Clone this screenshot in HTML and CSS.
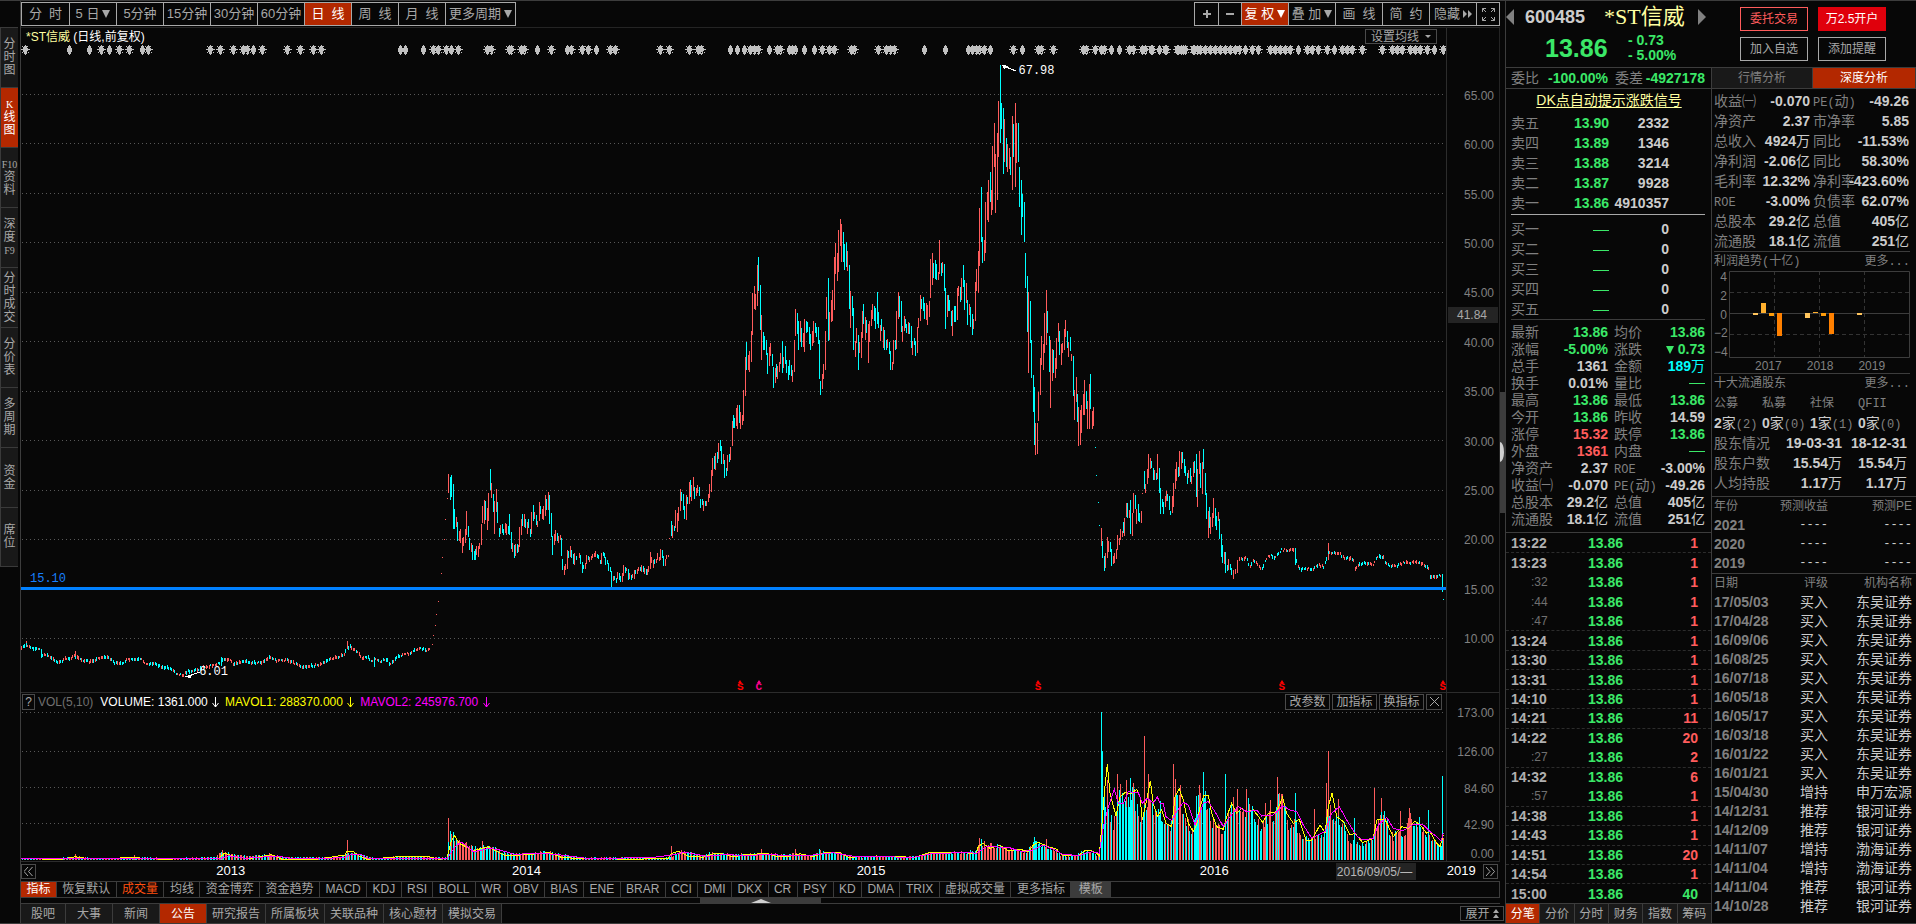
FILE: index.html
```html
<!DOCTYPE html>
<html lang="zh-CN">
<head>
<meta charset="utf-8">
<title>*ST信威 600485</title>
<link rel="stylesheet" href="styles.css">
</head>
<body>
<div class="app">
  <nav class="side">
    <button>分<br>时<br>图</button>
    <button class="on"><small>K</small><br>线<br>图</button>
    <button><small>F10</small><br>资<br>料</button>
    <button>深<br>度<br><small>F9</small></button>
    <button>分<br>时<br>成<br>交</button>
    <button>分<br>价<br>表</button>
    <button>多<br>周<br>期</button>
    <button>资<br>金</button>
    <button>席<br>位</button>
  </nav>

  <main class="main">
    <div class="toolbar">
      <div class="btns periods">
        <button>分&nbsp; 时</button><button>5 日 <i class="tri"></i></button><button>5分钟</button><button>15分钟</button><button>30分钟</button><button>60分钟</button><button class="on">日&nbsp; 线</button><button>周&nbsp; 线</button><button>月&nbsp; 线</button><button class="wide">更多周期 <i class="tri"></i></button>
      </div>
      <div class="btns tools">
        <button class="sm" aria-label="放大"><svg width="8" height="8"><path d="M0 4H8M4 0V8"/></svg></button><button class="sm" aria-label="缩小"><svg width="8" height="8"><path d="M0 4H8"/></svg></button><button class="on">复 权 <i class="tri"></i></button><button>叠 加 <i class="tri"></i></button><button>画&nbsp; 线</button><button>简&nbsp; 约</button><button>隐藏 <svg class="fill" width="9" height="8"><path d="M0 0L4 4L0 8ZM5 0L9 4L5 8Z"/></svg></button><button class="sm" aria-label="全屏"><svg class="thin" width="13" height="13"><path d="M.5 4V.5H4M.5.5L4 4M9 .5H12.500V4M12.500.5L9 4M.5 9V12.500H4M.5 12.500L4 9M9 12.500H12.500V9M12.500 12.500L9 9"/></svg></button>
      </div>
    </div>

    <section class="panel price">
      <div class="plot">
        <svg id="price" viewBox="21 28 1425 664" preserveAspectRatio="none"></svg>
        <h1 class="title">*ST信威 <span>(日线,前复权)</span></h1>
        <button class="ma-btn">设置均线 <i class="tri"></i></button>
        <span class="note high">67.98</span>
        <span class="note low">6.01</span>
        <span class="note level">15.10</span>
        <span class="ev e1">S</span><span class="ev e2">C</span><span class="ev e3">S</span><span class="ev e4">S</span><span class="ev e5">S</span>
      </div>
      <div class="axis">
        <span>65.00</span><span>60.00</span><span>55.00</span><span>50.00</span><span>45.00</span><span>40.00</span><span>35.00</span><span>30.00</span><span>25.00</span><span>20.00</span><span>15.00</span><span>10.00</span>
        <b class="cursor-price">41.84</b>
      </div>
    </section>

    <section class="panel vol">
      <div class="plot">
        <svg id="vol" viewBox="21 693 1425 168" preserveAspectRatio="none"></svg>
        <div class="legend">
          <button class="q">?</button><span class="dim">VOL(5,10)</span><span class="w">VOLUME: 1361.000 <svg width="7" height="11"><path d="M3.500 0V10M.5 6L3.500 10L6.500 6"/></svg></span><span class="y">MAVOL1: 288370.000 <svg width="7" height="11"><path d="M3.500 0V10M.5 6L3.500 10L6.500 6"/></svg></span><span class="m">MAVOL2: 245976.700 <svg width="7" height="11"><path d="M3.500 0V10M.5 6L3.500 10L6.500 6"/></svg></span>
        </div>
        <div class="vol-btns">
          <button>改参数</button><button>加指标</button><button>换指标</button><button class="x" aria-label="关闭"><svg width="9" height="9"><path d="M0 0L9 9M9 0L0 9"/></svg></button>
        </div>
      </div>
      <div class="axis"><span>173.00</span><span>126.00</span><span>84.60</span><span>42.90</span><span>0.00</span></div>
    </section>

    <div class="dates">
      <button aria-label="向左"><svg width="9" height="9"><path d="M4 0L0 4.500L4 9M8.500 0L4.500 4.500L8.500 9"/></svg></button>
      <span class="d d13">2013</span><span class="d d14">2014</span><span class="d d15">2015</span><span class="d d16">2016</span><span class="d d19">2019</span>
      <span class="cur">2016/09/05/—</span>
      <button aria-label="向右"><svg width="9" height="9"><path d="M0 0L4 4.500L0 9M4.500 0L8.500 4.500L4.500 9"/></svg></button>
    </div>

    <div class="inds"><div class="list">
      <button class="on">指标</button><button>恢复默认</button><button class="hot">成交量</button><button>均线</button><button>资金博弈</button><button>资金趋势</button><button>MACD</button><button>KDJ</button><button>RSI</button><button>BOLL</button><button>WR</button><button>OBV</button><button>BIAS</button><button>ENE</button><button>BRAR</button><button>CCI</button><button>DMI</button><button>DKX</button><button>CR</button><button>PSY</button><button>KD</button><button>DMA</button><button>TRIX</button><button>虚拟成交量</button><button>更多指标</button><button class="tpl">模板</button>
    </div></div>
    <div class="grip"><i><svg width="20" height="4"><path d="M0 4L10 0L20 4Z"/></svg></i></div>
    <div class="news">
      <button>股吧</button><button>大事</button><button>新闻</button><button class="on">公告</button><button>研究报告</button><button>所属板块</button><button>关联品种</button><button>核心题材</button><button>模拟交易</button>
      <button class="expand">展开 <svg width="6" height="9"><path d="M0 4L3 0L6 4ZM0 9L3 5L6 9Z"/></svg></button>
    </div>
  </main>

  <div class="vgrip"><i></i></div>

  <aside class="right">
    <header class="head">
      <div class="who">
        <div class="name"><i class="prev"></i><b>600485</b><strong>*ST信威</strong><i class="next"></i></div>
        <div class="last"><b class="big">13.86</b><div class="chg"><b>- 0.73</b><b>- 5.00%</b></div></div>
      </div>
      <div class="acts">
        <button class="a1">委托交易</button><button class="a2">万2.5开户</button><button>加入自选</button><button>添加提醒</button>
      </div>
    </header>

    <div class="quote">
      <div class="wei"><span>委比</span><b class="g">-100.00%</b><span>委差</span><b class="g">-4927178</b></div>
      <div class="dk"><a href="#dk">DK点自动提示涨跌信号</a></div>
      <table class="book">
        <tr><th>卖五</th><td class="g">13.90</td><td>2332</td></tr>
        <tr><th>卖四</th><td class="g">13.89</td><td>1346</td></tr>
        <tr><th>卖三</th><td class="g">13.88</td><td>3214</td></tr>
        <tr><th>卖二</th><td class="g">13.87</td><td>9928</td></tr>
        <tr><th>卖一</th><td class="g">13.86</td><td>4910357</td></tr>
      </table>
      <div class="buy"><table class="book">
        <tr><th>买一</th><td><i class="dash"></i></td><td>0</td></tr>
        <tr><th>买二</th><td><i class="dash"></i></td><td>0</td></tr>
        <tr><th>买三</th><td><i class="dash"></i></td><td>0</td></tr>
        <tr><th>买四</th><td><i class="dash"></i></td><td>0</td></tr>
        <tr><th>买五</th><td><i class="dash"></i></td><td>0</td></tr>
      </table></div>
      <table class="stats">
        <tr><th>最新</th><td class="g">13.86</td><th>均价</th><td class="g">13.86</td></tr>
        <tr><th>涨幅</th><td class="g">-5.00%</td><th>涨跌</th><td class="g"><i class="tri"></i> 0.73</td></tr>
        <tr><th>总手</th><td>1361</td><th>金额</th><td class="c">189<u>万</u></td></tr>
        <tr><th>换手</th><td>0.01%</td><th>量比</th><td><i class="dash"></i></td></tr>
        <tr><th>最高</th><td class="g">13.86</td><th>最低</th><td class="g">13.86</td></tr>
        <tr><th>今开</th><td class="g">13.86</td><th>昨收</th><td>14.59</td></tr>
        <tr><th>涨停</th><td class="r">15.32</td><th>跌停</th><td class="g">13.86</td></tr>
        <tr><th>外盘</th><td class="r">1361</td><th>内盘</th><td><i class="dash"></i></td></tr>
        <tr><th>净资产</th><td>2.37</td><th><s>ROE</s></th><td>-3.00%</td></tr>
        <tr><th>收益㈠</th><td>-0.070</td><th><s>PE(</s>动<s>)</s></th><td>-49.26</td></tr>
        <tr><th>总股本</th><td>29.2<u>亿</u></td><th>总值</th><td>405<u>亿</u></td></tr>
        <tr><th>流通股</th><td>18.1<u>亿</u></td><th>流值</th><td>251<u>亿</u></td></tr>
      </table>
      <div class="ticks">
        <div class="t"><b>13:22</b><b>13.86</b><b>1</b></div>
        <div class="t"><b>13:23</b><b>13.86</b><b>1</b></div>
        <div class="t s"><b>:32</b><b>13.86</b><b>1</b></div>
        <div class="t s"><b>:44</b><b>13.86</b><b>1</b></div>
        <div class="t s"><b>:47</b><b>13.86</b><b>1</b></div>
        <div class="t"><b>13:24</b><b>13.86</b><b>1</b></div>
        <div class="t"><b>13:30</b><b>13.86</b><b>1</b></div>
        <div class="t"><b>13:31</b><b>13.86</b><b>1</b></div>
        <div class="t"><b>14:10</b><b>13.86</b><b>1</b></div>
        <div class="t"><b>14:21</b><b>13.86</b><b>11</b></div>
        <div class="t"><b>14:22</b><b>13.86</b><b>20</b></div>
        <div class="t s"><b>:27</b><b>13.86</b><b>2</b></div>
        <div class="t"><b>14:32</b><b>13.86</b><b>6</b></div>
        <div class="t s"><b>:57</b><b>13.86</b><b>1</b></div>
        <div class="t"><b>14:38</b><b>13.86</b><b>1</b></div>
        <div class="t"><b>14:43</b><b>13.86</b><b>1</b></div>
        <div class="t"><b>14:51</b><b>13.86</b><b>20</b></div>
        <div class="t"><b>14:54</b><b>13.86</b><b>1</b></div>
        <div class="t"><b>15:00</b><b>13.86</b><b class="g">40</b></div>
      </div>
      <div class="qtabs"><button class="on">分笔</button><button>分价</button><button>分时</button><button>财务</button><button>指数</button><button>筹码</button></div>
    </div>

    <div class="deep">
      <div class="dtabs"><button>行情分析</button><button class="on">深度分析</button></div>
      <table class="fin">
        <tr><th>收益㈠</th><td>-0.070</td><th><s>PE(</s>动<s>)</s></th><td>-49.26</td></tr>
        <tr><th>净资产</th><td>2.37</td><th>市净率</th><td>5.85</td></tr>
        <tr><th>总收入</th><td>4924<u>万</u></td><th>同比</th><td>-11.53%</td></tr>
        <tr><th>净利润</th><td>-2.06<u>亿</u></td><th>同比</th><td>58.30%</td></tr>
        <tr><th>毛利率</th><td>12.32%</td><th>净利率</th><td><span class="pull">-423.60%</span></td></tr>
        <tr><th><s>ROE</s></th><td>-3.00%</td><th>负债率</th><td>62.07%</td></tr>
        <tr><th>总股本</th><td>29.2<u>亿</u></td><th>总值</th><td>405<u>亿</u></td></tr>
        <tr><th>流通股</th><td>18.1<u>亿</u></td><th>流值</th><td>251<u>亿</u></td></tr>
      </table>
      <div class="cap"><span>利润趋势<s>(</s>十亿<s>)</s></span><a href="#more1">更多<s>...</s></a></div>
      <div class="profit">
        <div class="py"><span>4</span><span>2</span><span>0</span><span>−2</span><span>−4</span></div>
        <svg viewBox="1729 272 181 87" preserveAspectRatio="none" class="pbox">
          <path class="grid" d="M1774.500 272V358M1819.500 272V358M1864.500 272V358M1730 293.500H1909M1730 335.500H1909"/>
          <path class="frame" d="M1729.500 272.500H1909.500V358.500H1729.500ZM1730 314.500H1909"/>
          <path fill="#ffc45c" d="M1753 314h5v2h-5zM1805 314h5v5h-5zM1857 314h5v2h-5z"/>
          <path fill="#ffb02e" d="M1761 304h5v10h-5zM1813 313h5v1h-5z"/>
          <path fill="#ff9c0a" d="M1769 314h5v3h-5zM1821 314h5v3h-5z"/>
          <path fill="#ff8000" d="M1777 314h5v23h-5zM1829 314h5v21h-5z"/>
        </svg>
        <div class="px"><span>2017</span><span>2018</span><span>2019</span></div>
      </div>
      <div class="cap"><span>十大流通股东</span><a href="#more2">更多<s>...</s></a></div>
      <div class="four dimrow"><span>公募</span><span>私募</span><span>社保</span><span><s>QFII</s></span></div>
      <div class="four"><span><b>2</b>家<s>(2)</s></span><span><b>0</b>家<s>(0)</s></span><span><b>1</b>家<s>(1)</s></span><span><b>0</b>家<s>(0)</s></span></div>
      <table class="hold">
        <tr><th>股东情况</th><td>19-03-31</td><td>18-12-31</td></tr>
        <tr><th>股东户数</th><td>15.54<u>万</u></td><td>15.54<u>万</u></td></tr>
        <tr><th>人均持股</th><td>1.17<u>万</u></td><td>1.17<u>万</u></td></tr>
      </table>
      <table class="fc">
        <tr class="h"><th>年份</th><th>预测收益</th><th>预测PE</th></tr>
        <tr><td>2021</td><td>----</td><td>----</td></tr>
        <tr><td>2020</td><td>----</td><td>----</td></tr>
        <tr><td>2019</td><td>----</td><td>----</td></tr>
      </table>
      <table class="fc rate">
        <tr class="h"><th>日期</th><th>评级</th><th>机构名称</th></tr>
        <tr><td>17/05/03</td><td>买入</td><td>东吴证券</td></tr>
        <tr><td>17/04/28</td><td>买入</td><td>东吴证券</td></tr>
        <tr><td>16/09/06</td><td>买入</td><td>东吴证券</td></tr>
        <tr><td>16/08/25</td><td>买入</td><td>东吴证券</td></tr>
        <tr><td>16/07/18</td><td>买入</td><td>东吴证券</td></tr>
        <tr><td>16/05/18</td><td>买入</td><td>东吴证券</td></tr>
        <tr><td>16/05/17</td><td>买入</td><td>东吴证券</td></tr>
        <tr><td>16/03/18</td><td>买入</td><td>东吴证券</td></tr>
        <tr><td>16/01/22</td><td>买入</td><td>东吴证券</td></tr>
        <tr><td>16/01/21</td><td>买入</td><td>东吴证券</td></tr>
        <tr><td>15/04/30</td><td>增持</td><td>申万宏源</td></tr>
        <tr><td>14/12/31</td><td>推荐</td><td>银河证券</td></tr>
        <tr><td>14/12/09</td><td>推荐</td><td>银河证券</td></tr>
        <tr><td>14/11/07</td><td>增持</td><td>渤海证券</td></tr>
        <tr><td>14/11/04</td><td>增持</td><td>渤海证券</td></tr>
        <tr><td>14/11/04</td><td>推荐</td><td>银河证券</td></tr>
        <tr><td>14/10/28</td><td>推荐</td><td>银河证券</td></tr>
      </table>
    </div>
  </aside>
</div>
<script src="chart.js"></script>
</body>
</html>
```

FILE: styles.css
```css
* { box-sizing: border-box; }
body { margin: 0; background: #070707; color: #a8a8a8; font: 12px/14px "Liberation Sans", "Noto Sans CJK SC", sans-serif; }
button { margin: 0; padding: 0; border: 0; background: none; color: inherit; font: inherit; white-space: nowrap; cursor: pointer; }
i, u, s { font-style: normal; text-decoration: none; }
svg { display: inline-block; flex: none; }
table { border-collapse: collapse; width: 100%; table-layout: fixed; }
th { font-weight: normal; text-align: left; padding: 0; color: #808080; white-space: nowrap; }
td { text-align: right; padding: 0; font-weight: bold; color: #cccccc; white-space: nowrap; }
u { font-weight: normal; }
s { font: 12px/12px "Liberation Mono", monospace; color: #808080; }
.on, button.on { background: #b32800; color: #ffffff; }
.g, td.g { color: #3be868; }
.r, td.r { color: #ff5c5c; }
.c, td.c { color: #00ffff; }
.tri { display: inline-block; border: 4px solid transparent; border-top: 8px solid currentColor; border-bottom: 0; }
.dash { display: inline-block; width: 16px; height: 1px; background: #3be868; vertical-align: middle; }

.app { display: grid; grid-template-columns: 21px minmax(0, 1fr) 5px 411px; min-height: 100vh; border-top: 1px solid #3c3c3c; border-bottom: 1px solid #3c3c3c; }

.side { border-right: 1px solid #3c3c3c; padding: 26px 2px 0 0; display: flex; flex-direction: column; }
.side button { height: 60px; border: 1px solid #3a3a3a; border-width: 1px 0 0 1px; background: #191919; line-height: 13px; font-size: 12px; }
.side button.on { background: #b32800; }
.side button:last-child { border-bottom-width: 1px; }
.side small { font: 10px/13px "Liberation Serif", serif; }

.main { display: flex; flex-direction: column; min-width: 0; }
.toolbar { display: flex; justify-content: space-between; height: 27px; padding-top: 1px; border-bottom: 1px solid #242424; }
.btns { display: flex; height: 24px; border: 1px solid #a8a8a8; }
.btns button { width: 47px; border-left: 1px solid #a8a8a8; display: flex; align-items: center; justify-content: center; gap: 3px; font-size: 13px; }
.btns button:first-child { border-left: 0; }
.btns .wide { width: 70px; }
.btns .sm { width: 23px; }
.btns svg path { stroke: currentColor; stroke-width: 2; fill: none; }
.btns svg.fill path { fill: currentColor; stroke: none; }
.btns svg.thin path { stroke-width: 1; }

.panel { display: grid; grid-template-columns: minmax(0, 1fr) 53px; border-right: 1px solid #242424; }
.price { flex: 1 1 664px; }
.vol { height: 170px; border-top: 1px solid #2c2c2c; border-bottom: 1px solid #2c2c2c; }
.plot { position: relative; min-width: 0; }
.plot > svg { position: absolute; width: 100%; height: 100%; }
.axis { position: relative; border-left: 1px solid #2c2c2c; color: #808080; text-align: right; padding-right: 5px; }
.price .axis { display: flex; flex-direction: column; justify-content: space-between; padding-top: 61px; padding-bottom: 46px; }
.vol .axis { display: grid; grid-template-rows: 39fr 36fr 36fr 29fr 14px; padding-top: 13px; }
.cursor-price { position: absolute; left: 1px; right: 1px; top: 42%; height: 16px; line-height: 16px; padding-right: 11px; background: #242424; color: #a8a8a8; font-weight: normal; }
.title { position: absolute; left: 5px; top: 2px; margin: 0; font-size: 12px; line-height: 14px; font-weight: normal; color: #ffffa0; }
.title span { color: #ffffff; }
.ma-btn { position: absolute; right: 9px; top: 1px; width: 72px; height: 15px; border: 1px solid #4a4a4a; background: #070707; display: flex; align-items: center; justify-content: center; gap: 6px; }
.ma-btn .tri { border-width: 3px 3px 0; }
.note { position: absolute; color: #ffffff; font: 12px/14px "Liberation Mono", monospace; }
.high { left: 70%; top: 36px; }
.low { left: 12.500%; top: 96%; }
.level { left: 9px; top: 82%; color: #1880ff; }
.ev { position: absolute; bottom: 0; width: 8px; text-align: center; color: #ff0000; font: bold 11px/9px "Liberation Mono", monospace; }
.ev::before { content: ""; display: block; margin: 0 2px; border: 2px solid transparent; border-top: 0; border-bottom: 3px solid currentColor; }
.e1 { left: 50.200%; }
.e2 { left: 51.500%; color: #ff0090; }
.e3 { left: 71.100%; }
.e4 { left: 88.200%; }
.e5 { left: 99.500%; }

.legend { position: absolute; left: 1px; top: 1px; display: flex; align-items: center; height: 16px; gap: 6px; }
.legend .q { width: 13px; height: 16px; border: 1px solid #4a4a4a; }
.legend svg { margin: 0 0 -2px 1px; }
.legend path, .dates path, .vol-btns path { stroke: currentColor; fill: none; }
.dim { color: #707070; margin-left: -3px; margin-right: 1px; }
.w { color: #ffffff; }
.y { color: #ffff00; }
.m { color: #ff00ff; }
.vol-btns { position: absolute; right: 4px; top: 1px; display: flex; gap: 2px; }
.vol-btns button { width: 45px; height: 16px; border: 1px solid #4a4a4a; background: #070707; }
.vol-btns .x { width: 16px; }

.dates { position: relative; height: 19px; display: flex; justify-content: space-between; align-items: center; padding-right: 2px; }
.dates button { width: 15px; height: 15px; border: 1px solid #4a4a4a; display: grid; place-items: center; }
.d { position: absolute; top: 1px; font-size: 13px; line-height: 15px; color: #ffffff; }
.d13 { left: 13.200%; }
.d14 { left: 33.200%; }
.d15 { left: 56.500%; }
.d16 { left: 79.700%; }
.d19 { left: 96.400%; }
.cur { position: absolute; left: 88.900%; top: 1px; width: 80px; height: 17px; line-height: 19px; padding-left: 1px; background: #242424; color: #b8b8b8; }

.inds { height: 17px; border: 1px solid #3c3c3c; border-width: 1px 1px 1px 0; }
.inds .list { display: flex; width: 1090px; max-width: 100%; height: 15px; }
.inds button { flex: 1 1 auto; border-right: 1px solid #3c3c3c; line-height: 15px; }
.inds .hot { color: #ff5010; }
.inds .tpl { background: #3c3c3c; padding: 0 2px; }
.grip { height: 6px; border-bottom: 1px solid #3c3c3c; }
.grip i { display: block; width: 121px; height: 5px; margin: 0 auto; background: #3c3c3c; text-align: center; line-height: 0; }
.grip svg { fill: #d0d0d0; margin-top: 1px; }
.news { display: flex; height: 19px; }
.news button { min-width: 47px; background: #191919; border-right: 1px solid #3c3c3c; }
.news button:first-child { min-width: 45px; }
.news .on { background: #b32800; }
.news button:nth-child(n+5) { width: 59px; }
.news button.expand { margin: 2px -4px 2px auto; width: 44px; min-width: 0; border: 1px solid #4a4a4a; background: #070707; display: flex; align-items: center; justify-content: center; gap: 3px; }
.news svg { fill: currentColor; }

.vgrip { display: flex; align-items: center; }
.vgrip i { width: 5px; height: 121px; margin-top: -20px; background: #3c3c3c; display: flex; align-items: center; }
.vgrip i::before { content: ""; width: 4px; height: 20px; border-radius: 0 4px 4px 0 / 0 10px 10px 0; background: #d0d0d0; }

.right { display: grid; grid-template-columns: 206px minmax(0, 1fr); grid-template-rows: 66px 1fr; border-left: 1px solid #3c3c3c; font-size: 14px; }
.head { grid-column: 1 / 3; display: flex; }
.who { width: 234px; }
.name { display: flex; align-items: center; height: 32px; }
.name b { font-size: 18px; color: #cccccc; margin-left: 11px; width: 79px; }
.name strong { font: 22px/28px "Liberation Serif", "Noto Sans CJK SC", serif; color: #ffffa0; width: 94px; }
.prev, .next { border: 8px solid transparent; }
.prev { border-left: 0; border-right-color: #808080; }
.next { border-right: 0; border-left-color: #808080; }
.last { display: flex; color: #3be868; padding-left: 39px; align-items: center; }
.big { font-size: 25px; line-height: 30px; width: 83px; }
.chg b { display: block; line-height: 15px; }
.acts { display: grid; grid-template-columns: 68px 68px; grid-auto-rows: 24px; gap: 6px 10px; padding-top: 6px; font-size: 12px; }
.acts button { border: 1px solid #a8a8a8; }
.acts .a1 { border-color: #ff5c5c; color: #ff5c5c; }
.acts .a2 { background: #e0000c; border-color: #e0000c; color: #ffffff; }

.quote { border-right: 1px solid #3c3c3c; display: flex; flex-direction: column; }
.wei { display: flex; height: 22px; line-height: 20px; padding: 0 6px 0 5px; border-top: 1px solid #3c3c3c; border-bottom: 1px solid #3c3c3c; color: #808080; white-space: nowrap; }
.wei b:nth-child(2) { width: 69px; margin-right: 7px; }
.wei b { text-align: right; }
.wei b:last-child { margin-left: auto; }
.dk { height: 24px; text-align: center; line-height: 22px; padding-left: 1px; }
.dk a { color: #ffffa0; text-underline-offset: 2px; }
.book { width: 158px; margin-left: 5px; }
.book tr { height: 20px; }
.book th { width: 40px; }
.book td:nth-child(2) { width: 58px; }
.buy { margin: 1px 6px 0 5px; padding-top: 4px; border-top: 1px solid #a8a8a8; border-bottom: 1px solid #3c3c3c; }
.buy .book { margin-left: 0; }
.book th, .stats th, .fin th, .hold th { line-height: 17px; }
.stats { width: 194px; margin: 3px 6px 5px 5px; }
.stats tr { height: 17px; }
.stats th, .stats td { line-height: 16px; }
.stats th:nth-child(3) { padding-left: 6px; }
.stats th { width: 42px; }
.stats td:nth-child(2) { width: 55px; }
.stats th:nth-child(3) { width: 50px; }
.ticks { flex: 1; display: flex; flex-direction: column; border-top: 1px solid #3c3c3c; }
.t { flex: 1; display: grid; grid-template-columns: 48px 64px 75px; align-items: center; padding-left: 5px; color: #3be868; border-top: 1px dashed #2c2c2c; line-height: 16px; }
.t b { text-align: right; }
.t b:first-child { text-align: left; color: #b0b0b0; }
.t b:last-child { color: #ff5c5c; }
.t b.g:last-child { color: #3be868; }
.t.s, .t:first-child { border-top-color: transparent; }
.t.s b:first-child { font-weight: normal; font-size: 12px; color: #707070; padding-left: 20px; }
.qtabs { display: flex; height: 20px; border-top: 1px solid #3c3c3c; font-size: 12px; }
.qtabs button { flex: 1; background: #191919; border-right: 1px solid #3c3c3c; }
.qtabs .on { background: #b32800; }
.qtabs button:last-child { border-right: 0; }

.deep { display: flex; flex-direction: column; min-width: 0; color: #808080; }
.dtabs { display: flex; height: 22px; border-top: 1px solid #3c3c3c; border-bottom: 1px solid #3c3c3c; font-size: 12px; flex: none; }
.dtabs button { width: 101px; background: #191919; border-right: 1px solid #3c3c3c; }
.dtabs button.on { flex: 1; background: #b32800; }
.fin { width: 195px; margin: 2px 0 0 2px; }
.fin tr { height: 20px; }
.fin th { width: 42px; }
.fin td:nth-child(2) { width: 54px; }
.fin th:nth-child(3) { padding-left: 3px; width: 44px; }
.fin td:nth-child(4) { width: 55px; }
.pull { margin-left: -8px; }
.cap { display: flex; justify-content: space-between; margin: 0 6px 0 2px; border-top: 1px solid #3c3c3c; font-size: 12px; line-height: 19px; height: 20px; }
.cap a { color: #808080; text-decoration: none; }
.profit { display: grid; grid-template-columns: 15px 1fr; margin: 0 6px 0 2px; grid-template-rows: 87px 15px; font-size: 12px; }
.py { display: flex; flex-direction: column; justify-content: space-between; text-align: right; padding-right: 2px; line-height: 12px; }
.pbox { width: 100%; height: 87px; }
.pbox .grid { stroke: #333333; stroke-dasharray: 4 3; fill: none; }
.pbox .frame { stroke: #3c3c3c; fill: none; }
.px { grid-column: 2; display: flex; gap: 25px; padding-left: 26px; line-height: 17px; height: 15px; }
.four { display: grid; grid-template-columns: repeat(4, 1fr); margin-left: 2px; margin-right: 10px; line-height: 20px; height: 20px; color: #cccccc; white-space: nowrap; }
.dimrow { color: #808080; font-size: 12px; }
.hold { width: 193px; margin-left: 2px; }
.hold tr { height: 20px; }
.hold th { width: 60px; }
.hold td:nth-child(2) { width: 68px; }
.fc { margin-top: 3px; border-top: 1px solid #3c3c3c; border-collapse: separate; border-spacing: 0; padding: 0 4px 0 2px; }
.fc tr { height: 19px; line-height: 17px; }
.fc .h { font-size: 12px; }
.fc th { text-align: right; }
.fc th:first-child, .fc td:first-child { text-align: left; color: #808080; width: 66px; }
.fc th:nth-child(2) { width: 48px; }
.fc td { font-weight: normal; }
.fc td:first-child { font-weight: bold; }
.fc:not(.rate) td:nth-child(n+2) { font: 12px/17px "Liberation Mono", monospace; }
.fc.rate { margin-top: 0; }
```

FILE: chart.js
```js
const NS = "http://www.w3.org/2000/svg";
const price = document.getElementById("price");
const vol = document.getElementById("vol");

function add(svg, d, attrs) {
  const p = document.createElementNS(NS, "path");
  p.setAttribute("d", d);
  p.setAttribute("shape-rendering", "crispEdges");
  for (const k in attrs) p.setAttribute(k, attrs[k]);
  svg.appendChild(p);
}

// Deterministic noise so that the drawing is the same on every load.
let seed = 7;
function rnd() {
  seed = (seed * 16807) % 2147483647;
  return seed / 2147483647;
}

function at(pts, x) {
  for (let i = 1; i < pts.length; i++) {
    if (x <= pts[i][0]) {
      const a = pts[i - 1], b = pts[i];
      return a[1] + (b[1] - a[1]) * (x - a[0]) / (b[0] - a[0]);
    }
  }
  return pts[pts.length - 1][1];
}

function pairs(s, ox, oy, sx, sy) {
  return s.trim().split(/\s+/).map(t => {
    const [x, y] = t.split(",").map(Number);
    return [ox + x / sx, oy + y / sy];
  });
}

// Horizontal dotted rules.
function rules(svg, ys) {
  add(svg, ys.map(y => `M22 ${y}.5H1446`).join(""), { stroke: "#585858", "stroke-dasharray": "1 3", fill: "none" });
}
rules(price, [94, 143, 193, 242, 292, 341, 391, 440, 490, 539, 638]);
rules(vol, [712, 751, 787, 823]);

const paths = { r: "", c: "" };
function bar(c, x, t, b) {
  paths[c] += `M${Math.floor(x) + 0.5} ${Math.round(t)}V${Math.max(Math.round(b), Math.round(t) + 1)}`;
}
function bars(s, ox, oy, sx) {
  for (const tok of s.trim().split(/\s+/)) {
    const [x, t, b] = tok.slice(1).split(",").map(Number);
    bar(tok[0], ox + x / sx, oy + t / 3, oy + (b || t + 3) / 3);
  }
}
function walk(s, ox, oy) {
  const pts = pairs(s, ox, oy, 3, 3);
  let k = 0;
  for (let x = pts[0][0]; x < pts[pts.length - 1][0]; x += k++ % 2 ? 1 : 2) {
    const m = at(pts, x) + (rnd() - 0.5) * 2, h = 1 + rnd() * 1;
    bar(rnd() < 0.5 ? "r" : "c", x, m - h, m + h);
  }
}

walk("65,1046 80,1035 105,1046 122,1048 127,1070 137,1062 155,1075 178,1088 195,1078 215,1073 226,1070 245,1080 270,1086 290,1078 305,1071 330,1073 345,1090 360,1092 385,1079 410,1080 425,1078 440,1092 465,1090 490,1103 515,1106 530,1120 550,1124 565,1114 590,1110 615,1100 640,1096 660,1090 670,1075 690,1080 703,1095 720,1088 740,1085 765,1088 790,1086 812,1070 830,1083 860,1080 880,1086 905,1100 935,1098 965,1093 985,1080 1010,1072 1032,1066 1042,1045 1050,1040 1070,1052 1088,1075 1105,1072 1120,1085 1130,1078 1145,1085 1158,1075 1170,1092 1185,1080 1205,1065 1235,1060 1255,1045 1280,1050 1294,1050", 0, 300);
bars("r80,1023,1040 c125,1048,1075 r226,1053,1072 c664,1072,1098 r1042,1023,1048 c1123,1070,1101 r1297,1033 r1300,1006 r1306,976 r1309,943 r1315,904 r1324,820 r1327,772 r1333,718 r1336,658 r1342,595 r1345,522,578 c1351,530,600 c1354,525,590 c1360,552,687 c1363,627,687 r1369,651,681 c1372,666,723 r1378,694,723 r1381,687,729 r1387,714,759 r1390,711,738 r1396,687,729 r1399,633,705 c1405,678,711 c1408,714,750 r1414,729,755 c1417,735,780 c1423,753,780 c1426,747,780 r1429,738,765 r1435,738,771 r1438,729,747", 0, 300, 3);

bars(`r4,972,1035 r7,918,969 r13,900,972 c16,903,960 r22,924,990 r25,879,963 c31,807,870 r34,849,894 c40,882,936 r43,903,1002 r49,867,936 c52,906,969 c58,984,1011 r61,975,1002 c67,972,999 c70,987,1005 r76,969,999 r79,972,1005 c85,978,1002 c88,942,1005 c94,996,1047 r97,1029,1056 c103,1035,1074 r106,1032,1068 c112,1032,1059 r115,1035,1056 r118,981,1041 r124,957,1005 c127,942,978 r133,942,981 c136,957,984 r142,966,1002 c145,957,984 c151,987,1011 r154,936,1002 c160,915,963 r163,936,957 c169,945,975 r172,963,981 r178,906,963 c181,918,942 r187,927,957 r190,918,960 r196,885,948 c199,897,930 r205,876,930 c208,885,972 c214,939,1011 c217,1008,1065 r223,1002,1035 r226,990,1023 c232,999,1023 r235,1008,1029 r241,1005,1020 c244,1014,1068 c247,1077,1110 r253,1098,1125 r256,1092,1110 r262,1050,1107 c265,1053,1074 r271,1038,1071 c274,1050,1074 c280,1062,1092 r283,1059,1095 c289,1068,1080 r298,1059,1074 c301,1065,1092 c307,1086,1119 c310,1095,1107 r316,1089,1107 r319,1065,1092 c325,1068,1080 r328,1071,1086 r334,1068,1080 r337,1062,1074 r343,1059,1071 r346,1053,1071 c352,1062,1074 c355,1065,1077 c361,1080,1092 r364,1059,1092 c370,1056,1068 c373,1059,1074 c376,1071,1095 c382,1080,1092 c385,1089,1113 c391,1101,1116 c394,1113,1161 r400,1128,1143 c403,1128,1140 c409,1134,1149 r412,1116,1137 c418,1119,1140 c421,1128,1146 r427,1119,1146 r430,1095,1128 c436,1101,1119 r439,1104,1113 c445,1107,1140 r448,1119,1137 c454,1125,1140 r457,1122,1134 r463,1110,1137 c466,1110,1122 r472,1107,1122 r475,1101,1113 c481,1101,1113 r484,1095,1116 c490,1098,1116 r493,1104,1122 c499,1107,1125 r502,1107,1125 r505,1098,1116 r511,1056,1107 r514,1071,1089 r520,1080,1104 c523,1077,1092 r529,1077,1089 r532,1059,1080 r538,1071,1083 r541,1047,1080 c547,1050,1074 c550,1068,1098 r556,1077,1098 r559,1065,1077 r565,1065,1071 r568,1014,1017 c574,963,1008 r577,975,1014 c583,978,993 r586,930,984 r592,939,996 r595,921,963 r601,867,933 c604,876,903 c610,882,930 c613,918,957 r619,885,960 c622,891,912 r628,846,912 c631,840,891 r634,855,903 r640,831,873 c643,861,897 r649,864,888 r652,855,879 c658,861,888 c661,897,924 c667,897,915 r670,903,933 c676,903,918 r679,903,918 r685,882,906 r688,852,894 r694,810,876 r697,774,828 c703,768,807 r706,759,810 c712,756,789 r715,729,777 c721,720,753 c724,738,792 r730,762,792 c733,780,834 c739,804,828 r742,765,813 c748,762,786 r751,741,780 r757,663,738 c760,645,684 c763,654,684 r769,624,678 r772,615,687 c778,615,669 r781,636,687 r787,645,675 r790,570,663 r796,471,588 c799,426,510 r805,465,510 r808,453,516 r814,393,486 r817,279,405 r823,258,327 r826,282,330 r832,195,318 c835,171,273 c841,255,390 r844,345,480 c850,396,450 c853,408,450 c859,420,465 c862,459,522 r868,441,498 r871,429,468 c877,462,498 c880,501,564 r886,504,549 c889,492,531 r892,498,537 r898,486,516 r901,459,492 c907,423,519 r910,471,504 c916,438,492 c919,480,519 c925,498,540 c928,480,525 c934,495,528 r937,510,546 r943,420,516 r946,327,408 c952,339,402 c955,363,450 r961,363,426 c964,384,441 r970,399,441 r973,357,456 c979,363,399 c982,366,396 c988,381,432 c991,402,450 r997,393,438 r1000,363,429 c1006,369,399 c1009,381,411 c1015,381,432 c1018,420,537 c1021,543,585 r1027,522,567 r1030,492,537 r1036,393,510 r1039,291,357 c1045,234,423 r1048,336,420 r1054,300,366 r1057,270,363 r1063,171,330 r1066,129,222 r1072,159,243 r1075,90,216 r1081,57,138 r1084,72,186 c1090,96,186 c1093,132,210 c1099,126,201 r1102,153,213 c1108,195,327 r1111,273,384 c1117,288,348 c1120,324,450 r1126,423,471 r1129,384,429 c1135,405,510 r1138,426,459 r1144,396,474 r1147,333,414 c1150,312,372 r1156,351,420 c1159,360,399 r1165,372,489 r1168,363,426 r1174,330,378 r1177,312,357 c1183,318,363 c1186,324,387 c1192,276,372 c1195,336,384 r1201,375,423 c1204,357,393 r1210,381,444 c1213,390,450 c1219,420,450 r1222,417,444 c1228,426,462 c1231,453,510 r1237,486,510 r1240,420,492 c1246,420,450 r1249,333,447 r1255,276,357 c1258,288,351 c1264,303,396 r1267,378,426 r1273,348,393 c1276,357,384 c1279,372,399 r1285,366,402 c1288,369,402 c1294,378,444 r1297,423,465 c1303,414,435 c1306,423,468 r1312,381,459 r1315,354,384 r1321,285,363 c1324,297,327 c1330,291,333 c1333,309,357 r1339,309,360 r1342,315,375 r1348,303,351 r1351,177,294 r1357,159,255 c1360,189,234 c1366,180,237 c1369,192,240 r1375,216,240 r1378,120,222 c1384,189,228 r1387,186,219 c1393,192,273 c1396,264,387 r1402,285,351 c1405,285,333 c1408,300,333 c1414,333,378 r1417,330,408 c1423,318,366 c1426,318,366 r1432,264,360 r1435,258,288 c1441,261,306 r1444,234,300 c1450,195,261 c1453,240,330 r1459,249,309 c1462,300,375 r1468,312,345 c1471,321,381 c1477,342,405 r1480,357,387 r1486,246,363 r1489,207,273 r1495,153,279 r1498,24,198 c1504,-39,126 c1507,111,189 r1513,120,183 r1516,6,159`, 480, 200, 3);

bars("r973,576,660 r976,540,666 c981,516,606 r984,570,645 r987,438,630 r992,369,501 r995,462,639 r1001,399,600 r1003,303,471 c1009,195,430 c1012,309,387 c1018,324,522 r1020,357,486 c1026,414,501 r1029,432,516 r1034,444,507 c1037,471,525 r1043,348,570 c1046,372,471 r1051,309,561 r1054,369,489 c1060,369,486 c1062,501,621 c1068,540,705 c1071,582,651 c1077,606,726", 640, 0, 2.8);

bars(`c136,159,264 c142,228,396 r145,276,519 c151,303,429 c154,420,534 c160,525,636 c163,561,735 r166,669,765 r172,669,762 r175,576,663 r181,474,585 r184,408,495 r190,432,510 r193,339,459 r199,270,435 c202,333,399 c208,408,516 r211,420,624 r217,447,543 c220,450,519 r226,474,534 r229,414,507 r235,369,426 c238,393,465 r244,432,495 r247,429,459 r253,387,450 r256,360,411 c262,393,444 r265,426,471 c271,411,453 r274,462,483 c280,468,588 r283,570,660 r289,531,606 c292,582,666 r295,621,738 r301,630,735 r304,615,699 r310,582,645 r313,540,645 c319,573,627 r322,603,687 r328,552,687 c331,522,627 r337,633,687 r340,621,678 c346,741,744 c349,825,828 c355,906,909 c358,975,978 r364,984,1038 c367,1023,1074 c373,1068,1113 r376,1059,1104 r382,1011,1074 r385,1023,1056 c391,1026,1056 c394,1047,1098 r400,1068,1092 r403,1059,1089 r409,1047,1078 r412,1005,1050 r418,1014,1035 r421,987,1020 r427,993,1011 c430,966,999 r433,954,1008 r439,909,951 c442,909,954 r448,930,954 c451,900,1002 r457,939,1008 r460,879,939 c466,885,927 r469,927,972 c475,912,963 c478,939,966 r484,933,969 r487,879,882 c493,813,867 r496,852,879 r502,807,852 r505,762,834 r511,774,807 c514,783,804 c520,804,840 r523,810,840 c529,819,840 r532,762,837 c538,804,879 c541,864,942 c547,897,921 c550,906,942 r556,888,921 r559,873,903 c562,882,903 c568,888,930 c571,933,945 r577,888,939 r580,849,921 r586,807,867 r589,786,843 c595,801,831 r598,753,828 r604,756,807 c607,756,789 c613,777,819 c616,798,828 c622,819,852 r625,810,834 c631,804,846 r634,828,852 r640,786,831 c643,783,819 c649,762,891 r652,807,921 r658,753,822 c661,789,864 r667,786,882 c670,747,807 c676,819,885 c679,879,957 r685,933,1014 c688,921,984 r691,951,1002 r697,939,981 r700,894,954 c706,924,978 c709,948,990 r715,936,963 c718,957,1017 c724,1002,1071 c727,1035,1089 r733,1056,1092 c736,1056,1119 c742,1095,1113 r745,1077,1110 c751,1092,1110 c754,1104,1125 r760,1110,1137 r766,1107,1122 r772,1080,1119 r1045,1029,1080 c947,1044,1095 c1387,1122,1176 c1390,1197,1200`, 980, 200, 3);
walk("778,1078 800,1072 808,1105 820,1080 835,1098 845,1110 855,1082 870,1066 885,1072 905,1050 945,1050 950,1095 960,1108 1000,1106 1010,1095 1030,1100 1040,1075 1045,1055 1060,1060 1078,1060 1090,1072 1120,1080 1125,1105 1150,1088 1180,1095 1190,1072 1210,1070 1220,1095 1250,1098 1270,1088 1320,1086 1345,1105 1348,1130 1385,1128", 980, 200);

add(price, paths.r, { stroke: "#ff5c5c", fill: "none" });
add(price, paths.c, { stroke: "#00ffff", fill: "none" });
add(price, "M21 587H1446V590H21Z", { fill: "#0080ff" });
add(price, "M1002 65L1009 66L1004 69ZM184 677L192 674L191 678Z", { fill: "#ffffff" });
add(price, "M1006 67L1016 71M188 676L200 672", { stroke: "#ffffff", fill: "none" });

// Event marks along the top edge: full stars, and narrow ones flagged with "n".
function stars(s, ox, sx) {
  let d = "";
  for (const tok of s.trim().split(/\s+/)) {
    const x = Math.round(ox + parseFloat(tok) / sx);
    d += `M${x - 1} 46h1v-1h1v1h1v8h-1v1h-1v-1h-1zM${x - 2} 48h5v4h-5z`;
    if (!tok.endsWith("n")) d += `M${x - 4} 49h9v1h-9zM${x - 3} 46h1v1h1v1h-1v-1h-1zM${x + 2} 46h1v1h-1v1h-1v-1h1zM${x - 3} 52h1v-1h1v1h-1v1h-1zM${x + 2} 52h1v1h1v-1h-1v-1h-1z`;
  }
  add(price, d, { fill: "#c0c0c0" });
}
stars("61 170n 217n 248 268n 292 315 347n 362 515 540 570 595 606 621n 641 704 736 767 787 979n 993n 1037n 1060 1073 1093 1106n 1123 1193 1204 1247 1253 1277 1285 1315n 1350 1390n 1400 1425 1440 1459n 1495 1507", 0, 2.45);
stars("57 80 138 162 172 253n 272n 290n 308 320 330 362n 383 392 418n 425 435n 458n 486n 510 530 542 592 598 665 690 700 711 796n 855n 917n 930 940 950 962 981n 1043 1070n 1113 1122 1155 1240 1248 1275 1290 1300 1318n 1342n 1370 1380 1405 1415 1432 1454n 1471 1503 1515 1525 1548 1560", 640, 2.8);
stars("5 28n 47 85 100 132 150 165 180 195 210 225 240 255 268 286n 306 325 360 375 390 405 420 445n 470 485 505 530 552n 575 590 605 635 695 725 740 755 780 795 810 830 853n 880", 1150, 3);

// Volume: base 860, envelope of heights plus single peaks.
const env = "21,2 60,2 74,4 90,2 120,2 134,3 170,2 215,3 220,9 235,6 250,4 268,6 285,3 340,3 348,7 365,5 375,2 400,4 430,3 447,3 449,30 458,20 470,14 480,14 495,13 505,7 530,7 548,9 560,6 580,3 600,3 660,2 671,3 680,10 700,5 712,8 745,6 760,7 780,6 795,7 810,5 820,9 840,6 855,3 920,4 930,8 965,8 975,10 980,18 1000,14 1025,8 1034,20 1055,10 1065,5 1080,7 1085,10 1099,9 1100,6".split(" ").map(t => t.split(",").map(Number));
const env2 = pairs("0,4 50,5 65,10 100,7 118,4 124,60 130,65 150,50 160,38 170,70 180,72 200,68 230,65 240,45 247,40 255,60 265,75 275,55 300,55 315,38 330,33 340,60 360,70 370,48 395,32 405,50 430,75 445,55 460,36 490,30 500,50 520,58 545,50 560,58 590,42 600,36 630,52 645,45 655,65 670,60 680,40 700,38 715,35 725,22 755,22 775,30 790,22 800,60 820,45 850,38 865,22 900,15 940,25 960,45 975,50 985,32 1000,25 1010,38 1030,28 1050,45 1080,42 1095,28 1110,22 1143,15 1147,26 1156,26", 1060, 0, 3, 1);
const vp = { r: "", c: "" };
function vbar(c, x, h) { vp[c] += `M${Math.floor(x) + 0.5} 860V${Math.round(860 - h)}`; }
let k = 0;
for (let x = 22; x < 1444; x += k++ % 2 ? 1 : 2) {
  const e = x < 1060 ? at(env, x) : at(env2, x);
  vbar(rnd() < 0.5 ? "r" : "c", x, Math.max(1, e * (0.75 + rnd() * 0.35)));
}
for (const t of "r75,6 r134,5 r222,10 c221,8 r269,7 r347,20 r448,42 c450,29 c453,22 r466,18 r482,19 r671,14 r795,11 c819,11 r761,11 r979,22 c981,21 c1034,23 r1046,21".split(" ")) {
  const [x, h] = t.slice(1).split(",").map(Number);
  vbar(t[0], x, h);
}
for (const t of "c124,148 c127,109 c133,64 r142,80 r172,86 r181,76 r199,80 c211,82 r220,77 r253,124 r265,86 c301,59 r340,96 r346,81 c409,64 r418,75 c430,88 c436,69 c496,86 r532,71 r559,71 c565,62 r616,57 r631,60 r652,83 r667,66 c706,67 r763,51 r799,77 r805,109 r835,61 c883,42 r943,72 r964,62 c973,49 r1021,49 r1048,52 c1105,50 c1147,84".split(" ")) {
  const [x, h] = t.slice(1).split(",").map(Number);
  vbar(t[0], 1060 + x / 3, h);
}
add(vol, vp.r, { stroke: "#ff5c5c", fill: "none" });
add(vol, vp.c, { stroke: "#00ffff", fill: "none" });

function average(a, b, c, color) {
  const pts = [...pairs(a, 0, 680, 2.45, 3), ...pairs(b, 600, 680, 3, 3), ...pairs(c, 1060, 660, 3, 3)].sort((p, q) => p[0] - q[0]);
  add(vol, "M" + pts.map(p => p[0].toFixed(1) + " " + p[1].toFixed(1)).join("L"), { stroke: color, fill: "none" });
}
average("52,536 150,538 185,530 215,536 330,533 400,538 500,534 535,535 550,520 580,532 610,536 665,524 690,537 780,537 845,525 850,514 865,514 880,528 900,538 990,529 1050,530 1075,538 1095,535 1105,485 1113,466 1125,490 1160,512 1195,500 1240,528 1300,523 1345,518 1375,532 1430,537",
  "0,536 100,538 205,535 215,520 235,514 265,528 310,532 345,520 370,522 400,531 430,525 500,520 530,530 575,528 600,521 640,530 680,516 720,518 745,532 830,528 945,532 990,517 1035,519 1080,516 1110,520 1128,522 1135,500 1148,490 1170,505 1200,496 1225,512 1260,508 1285,515 1300,495 1315,487 1345,500 1370,508",
  "5,585 55,587 75,572 95,572 110,580 118,588 125,500 133,400 142,312 150,400 168,468 180,410 195,398 215,400 230,388 240,410 247,480 258,430 271,363 280,430 292,470 305,450 318,490 335,500 345,410 358,387 370,420 385,490 400,515 410,495 420,440 432,405 445,405 455,460 470,500 490,508 500,470 515,430 530,460 545,445 560,455 580,450 592,465 608,487 625,460 650,455 668,412 680,460 700,490 718,478 738,540 755,540 780,495 795,518 805,440 816,400 830,470 850,485 870,525 885,520 908,548 940,535 950,480 975,478 1000,530 1025,500 1045,505 1065,483 1085,500 1100,520 1110,515 1130,550 1140,560 1150,525", "#ffff00");
average("52,536 540,536 560,527 600,535 680,528 720,537 845,533 860,523 885,524 900,535 1095,537 1115,500 1130,486 1160,515 1200,505 1225,510 1260,523 1330,520 1375,525 1430,534",
  "0,535 150,533 215,525 255,517 320,529 380,523 430,528 510,522 560,528 640,525 700,518 760,529 940,532 1000,520 1110,518 1130,520 1160,500 1225,502 1265,515 1300,510 1330,495 1370,512",
  "5,582 55,587 95,575 118,580 130,500 145,440 163,388 175,430 190,430 205,395 235,398 247,430 262,415 280,430 292,410 300,430 310,430 318,470 335,482 350,455 370,427 385,435 405,495 420,460 430,430 445,425 465,455 490,500 510,470 535,440 560,455 590,450 605,468 640,465 668,437 690,450 710,455 730,495 755,535 795,515 815,460 838,440 860,480 890,528 908,540 940,535 955,495 980,472 1000,505 1030,512 1060,492 1090,495 1110,515 1130,530 1143,543 1150,520", "#ff00ff");
```
